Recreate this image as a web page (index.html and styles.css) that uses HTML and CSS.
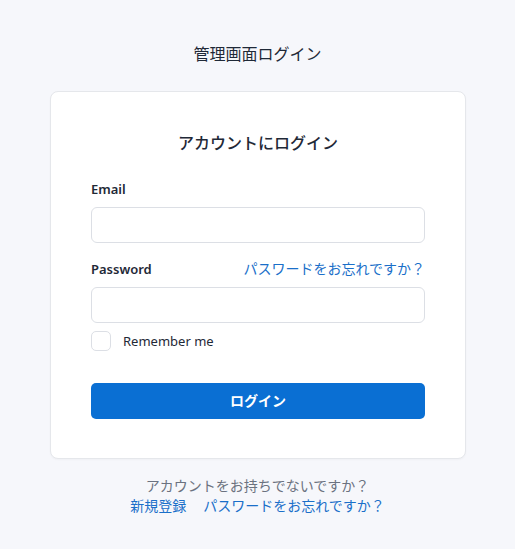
FILE: index.html
```html
<!DOCTYPE html>
<html lang="ja">
<head>
<meta charset="utf-8">
<title>管理画面ログイン</title>
<link rel="stylesheet" href="styles.css">
</head>
<body>
<main class="page">
  <h1 class="site-title">管理画面ログイン</h1>
  <section class="card">
    <h2 class="card-title">アカウントにログイン</h2>
    <form class="form">
      <div class="field">
        <label class="label" for="email">Email</label>
        <input class="input" id="email" type="email">
      </div>
      <div class="field">
        <div class="label-row">
          <label class="label" for="password">Password</label>
          <a class="link" href="#">パスワードをお忘れですか？</a>
        </div>
        <input class="input" id="password" type="password">
      </div>
      <label class="remember">
        <span class="checkbox"></span>
        <span class="remember-text">Remember me</span>
      </label>
      <button class="button" type="button">ログイン</button>
    </form>
  </section>
  <div class="footer">
    <p class="footer-text">アカウントをお持ちでないですか？</p>
    <p class="footer-links"><a class="link" href="#">新規登録</a><a class="link" href="#">パスワードをお忘れですか？</a></p>
  </div>
</main>
</body>
</html>
```
FILE: styles.css
```css
* { box-sizing: border-box; }
html, body { margin: 0; padding: 0; }
body {
  background: #f6f7fb;
  font-family: "Noto Sans", "Noto Sans CJK JP", sans-serif;
  color: #1f2937;
}
.page {
  display: flex;
  flex-direction: column;
  align-items: center;
  padding-top: 42px;
}
.site-title {
  margin: 0;
  font-size: 16px;
  line-height: 24px;
  font-weight: 400;
  color: #1f2937;
}
.card {
  margin-top: 25px;
  margin-left: 1px;
  width: 416px;
  background: #fff;
  border: 1px solid #e5e7eb;
  border-radius: 8px;
  box-shadow: 0 1px 2px rgba(0,0,0,0.03);
  padding: 39px 40px 39px;
}
.card-title {
  margin: 0;
  text-align: center;
  font-size: 16px;
  line-height: 24px;
  font-weight: 500;
  color: #1f2937;
}
.form {
  margin-top: 24px;
  display: flex;
  flex-direction: column;
}
.field { display: flex; flex-direction: column; gap: 8px; }
.field + .field { margin-top: 16px; }
.label-row { display: flex; justify-content: space-between; align-items: center; }
.label {
  font-size: 13px;
  line-height: 20px;
  font-weight: 600;
  color: #1f2937;
}
.link {
  color: #1a6fc9;
  text-decoration: none;
  font-size: 14px;
  line-height: 20px;
}
.input {
  height: 36px;
  width: 100%;
  border: 1px solid #dcdfe5;
  border-radius: 6px;
  background: #fff;
  font: inherit;
  padding: 0 10px;
}
.remember {
  margin-top: 8px;
  display: flex;
  align-items: center;
  gap: 12px;
}
.checkbox {
  width: 20px;
  height: 20px;
  border: 1px solid #dcdfe5;
  border-radius: 5px;
  background: #fff;
}
.remember-text {
  font-size: 13px;
  line-height: 20px;
  color: #1f2937;
}
.button {
  margin-top: 32px;
  height: 36px;
  width: 100%;
  border: none;
  border-radius: 5px;
  background: #0a6fd3;
  color: #fff;
  font-family: inherit;
  font-size: 14px;
  font-weight: 700;
  line-height: 34px;
}
.footer {
  margin-top: 17px;
  text-align: center;
}
.footer-text {
  margin: 0;
  font-size: 14px;
  line-height: 20px;
  color: #6b7280;
}
.footer-links {
  margin: 0;
  display: flex;
  justify-content: center;
  gap: 17px;
}
```
